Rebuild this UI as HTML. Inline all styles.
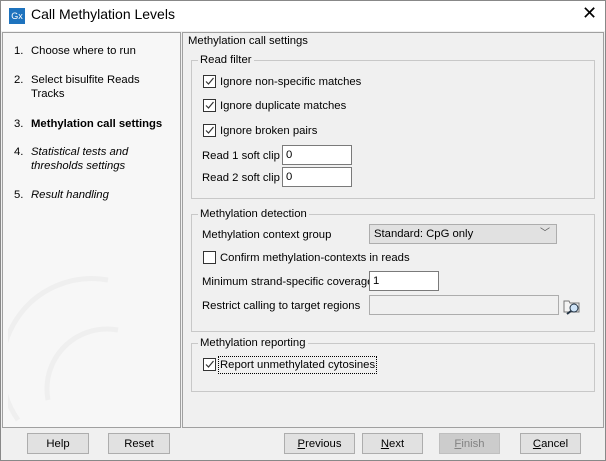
<!DOCTYPE html>
<html><head><style>
*{box-sizing:border-box}
body{margin:0;width:606px;height:461px;background:#f0f0f0;font-family:"Liberation Sans",sans-serif;font-size:11.3px;color:#000;position:relative;overflow:hidden}
.a{position:absolute;white-space:nowrap;line-height:16px}
.win{position:absolute;left:0;top:0;width:606px;height:461px;border:1px solid #888}
.title{position:absolute;left:1px;top:1px;width:604px;height:30px;background:#fff}
.lp{position:absolute;left:2px;top:32px;width:179px;height:396px;background:#f7f7f7;border:1px solid #a0a0a0}
.rp{position:absolute;left:182px;top:32px;width:422px;height:396px;border:1px solid #a0a0a0}
.grp{position:absolute;border:1px solid #c8c8c8}
.gl{position:absolute;background:#f0f0f0;padding:0 2px;top:-9px;left:6px;line-height:16px}
.cb{position:absolute;width:13px;height:13px;border:1px solid #333;background:#fff}
.cb svg{position:absolute;left:0;top:0}
.inp{position:absolute;height:20px;border:1px solid #7a7a7a;background:#fff;padding:3px 3px}
.btn{position:absolute;top:433px;height:21px;width:62px;border:1px solid #adadad;background:#e1e1e1;text-align:center;line-height:20px}
u{text-decoration:underline}
</style></head><body>
<div class="win"></div>
<div class="title"></div>
<div class="a" style="left:9px;top:8px;width:16px;height:16px;background:#1e73be;color:#fff;font-size:9px;line-height:16px;text-align:center">Gx</div>
<div class="a" style="left:31px;top:6px;font-size:14px">Call Methylation Levels</div>
<div class="a" style="left:582px;top:5px;font-size:18px">✕</div>
<div class="lp"></div>
<svg class="a" style="left:8px;top:240px" width="140" height="190"><g fill="none" stroke="#efefef" stroke-width="5"><path d="M10 180 A90 90 0 0 1 100 40"/><path d="M40 160 A60 60 0 0 1 110 90"/></g></svg>
<div class="a" style="left:14px;top:43px">1.</div><div class="a" style="left:31px;top:43px">Choose where to run</div>
<div class="a" style="left:14px;top:72px">2.</div><div class="a" style="left:31px;top:72px">Select bisulfite Reads</div><div class="a" style="left:31px;top:86px">Tracks</div>
<div class="a" style="left:14px;top:116px">3.</div><div class="a" style="left:31px;top:116px;font-weight:bold">Methylation call settings</div>
<div class="a" style="left:14px;top:144px">4.</div><div class="a" style="left:31px;top:144px;font-style:italic">Statistical tests and</div><div class="a" style="left:31px;top:158px;font-style:italic">thresholds settings</div>
<div class="a" style="left:14px;top:187px">5.</div><div class="a" style="left:31px;top:187px;font-style:italic">Result handling</div>
<div class="rp"></div>
<div class="a" style="left:188px;top:33px">Methylation call settings</div>

<div class="grp" style="left:191px;top:60px;width:404px;height:139px"><div class="gl">Read filter</div></div>
<div class="cb" style="left:203px;top:75px"><svg width="11" height="11"><path d="M2 5.5 L4.5 8 L9.5 2" stroke="#333" fill="none" stroke-width="1.2"/></svg></div><div class="a" style="left:220px;top:74px">Ignore non-specific matches</div>
<div class="cb" style="left:203px;top:99px"><svg width="11" height="11"><path d="M2 5.5 L4.5 8 L9.5 2" stroke="#333" fill="none" stroke-width="1.2"/></svg></div><div class="a" style="left:220px;top:98px">Ignore duplicate matches</div>
<div class="cb" style="left:203px;top:124px"><svg width="11" height="11"><path d="M2 5.5 L4.5 8 L9.5 2" stroke="#333" fill="none" stroke-width="1.2"/></svg></div><div class="a" style="left:220px;top:123px">Ignore broken pairs</div>
<div class="a" style="left:202px;top:148px">Read 1 soft clip</div><div class="inp" style="left:282px;top:145px;width:70px">0</div>
<div class="a" style="left:202px;top:170px">Read 2 soft clip</div><div class="inp" style="left:282px;top:167px;width:70px">0</div>

<div class="grp" style="left:191px;top:214px;width:404px;height:118px"><div class="gl">Methylation detection</div></div>
<div class="a" style="left:202px;top:227px">Methylation context group</div>
<div class="a" style="left:369px;top:224px;width:188px;height:20px;border:1px solid #adadad;background:#e1e1e1;padding:1px 4px">Standard: CpG only<span style="position:absolute;right:6px;top:1px;font-size:10px;color:#555">﹀</span></div>
<div class="cb" style="left:203px;top:251px"></div><div class="a" style="left:220px;top:250px">Confirm methylation-contexts in reads</div>
<div class="a" style="left:202px;top:274px">Minimum strand-specific coverage</div><div class="inp" style="left:369px;top:271px;width:70px;line-height:13px">1</div>
<div class="a" style="left:202px;top:298px">Restrict calling to target regions</div><div class="a" style="left:369px;top:295px;width:190px;height:20px;border:1px solid #adadad;background:#f0f0f0"></div>
<svg class="a" style="left:563px;top:297px" width="18" height="18"><path d="M1 4 h5 l1 2 h9 v9 h-15z" fill="#f4f4f4" stroke="#777"/><circle cx="11" cy="11" r="4" fill="#cfe4f8" stroke="#234"/><path d="M8 14 L4 17" stroke="#234" stroke-width="2"/></svg>

<div class="grp" style="left:191px;top:343px;width:404px;height:49px"><div class="gl">Methylation reporting</div></div>
<div class="cb" style="left:203px;top:358px"><svg width="11" height="11"><path d="M2 5.5 L4.5 8 L9.5 2" stroke="#333" fill="none" stroke-width="1.2"/></svg></div><div class="a" style="left:219px;top:357px;outline:1px dotted #000;padding:0 1px">Report unmethylated cytosines</div>

<div class="btn" style="left:27px">Help</div>
<div class="btn" style="left:108px">Reset</div>
<div class="btn" style="left:284px;width:71px"><u>P</u>revious</div>
<div class="btn" style="left:362px;width:61px"><u>N</u>ext</div>
<div class="btn" style="left:439px;width:61px;background:#ccc;border-color:#bfbfbf;color:#838383"><u>F</u>inish</div>
<div class="btn" style="left:520px;width:61px"><u>C</u>ancel</div>
</body></html>
